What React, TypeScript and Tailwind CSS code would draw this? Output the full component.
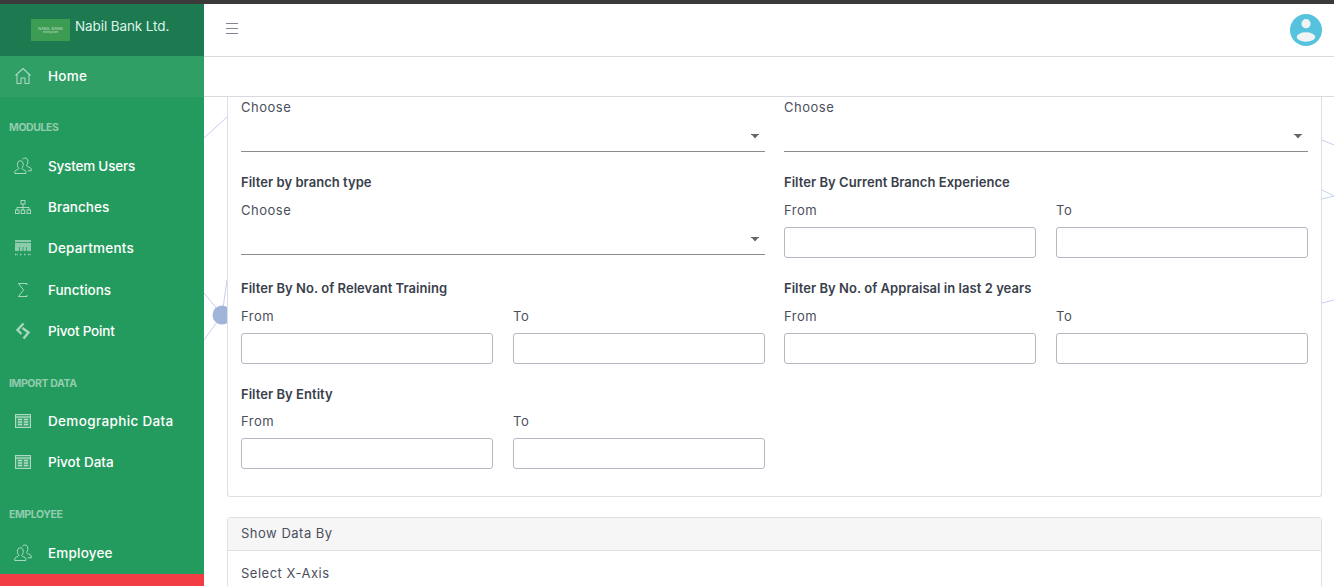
import React from "react";

function IconHome() {
  return (
    <svg width="18" height="18" viewBox="0 0 18 18" fill="none" stroke="currentColor" strokeWidth="1.1">
      <path d="M1.500 8.500 9 1.500l7.500 7M3 7.500v9h4v-5.500h4v5.500h4v-9" strokeLinejoin="round" />
    </svg>
  );
}
function IconUsers() {
  return (
    <svg width="18" height="18" viewBox="0 0 18 18" fill="none" stroke="currentColor" strokeWidth="1">
      <path d="M.8 16.500v-1.900c0-1.500 3.500-1.700 4.100-3.300-1-1-1.500-2.300-1.500-4 0-2.200 1.100-3.500 2.900-3.500s2.900 1.300 2.900 3.500c0 1.700-.5 3-1.500 4 .6 1.600 4.100 1.800 4.100 3.300v1.900z" />
      <path d="M8.300 2.400C8.800 1.500 9.800 1 11 1c1.800 0 2.900 1.300 2.900 3.500 0 1.700-.5 3-1.500 4 .6 1.600 4.800 1.800 4.800 3.300v2h-3.400" />
    </svg>
  );
}
function IconBranches() {
  return (
    <svg width="18" height="18" viewBox="0 0 18 18" fill="none" stroke="currentColor" strokeWidth="1">
      <rect x="7" y="2.500" width="4" height="3.500" />
      <path d="M9 6v3M3 12V9.500h12V12M9 9.500V12" />
      <rect x="1.500" y="12" width="3.500" height="3.500" />
      <rect x="7.200" y="12" width="3.500" height="3.500" />
      <rect x="13" y="12" width="3.500" height="3.500" />
    </svg>
  );
}
function IconDept() {
  return (
    <svg width="18" height="18" viewBox="0 0 18 18" fill="none" stroke="currentColor">
      <path d="M1 1h16v10H1z" fill="currentColor" stroke="none" opacity=".8" />
      <path d="M1 3.500h16" stroke="#249b5e" strokeWidth=".8" />
      <path d="M1 11.500h16" strokeWidth="1.400" opacity=".7" />
      <path d="M5.500 8v6M9 8v6M12.500 8v6" stroke="#249b5e" strokeWidth=".8" />
      <path d="M1 15.500h3M6 15.500h2M10 15.500h2M14 15.500h3" strokeWidth="1.500" strokeDasharray="1 .6" />
    </svg>
  );
}
function IconSigma() {
  return (
    <svg width="18" height="18" viewBox="0 0 18 18" fill="none" stroke="currentColor" strokeWidth="1">
      <path d="M13 4V2.500H4.500L9.500 9l-5 6.500H13V14" />
    </svg>
  );
}
function IconPivot() {
  return (
    <svg width="18" height="18" viewBox="0 0 18 18" fill="none" stroke="currentColor" strokeWidth="2.400">
      <path d="M9.500 1.500 3.500 8 7.500 12" />
      <path d="M8.500 6 14.500 10.500 9.500 16.500" />
    </svg>
  );
}
function IconTable() {
  return (
    <svg width="18" height="18" viewBox="0 0 18 18" fill="none" stroke="currentColor" strokeWidth="1">
      <rect x="1.500" y="2.500" width="15" height="13" fill="currentColor" fillOpacity=".25" />
      <path d="M1.500 5h15" strokeWidth="1.200" />
      <path d="M4 7.500h4M4 10h4M4 12.500h4M10 7.500h4M10 10h4M10 12.500h4" strokeWidth="1.300" />
    </svg>
  );
}

function NavItem({
  icon,
  label,
  active,
  track,
}: {
  icon: React.ReactNode;
  label: string;
  active?: boolean;
  track: string;
}) {
  return (
    <div className={`flex h-[41.25px] items-center pb-[2px] pl-[14px] ${active ? "bg-[#2f9f66]" : ""}`}>
      <span className="flex w-[34px] text-white/60">{icon}</span>
      <span className={`text-[13.5px] font-medium text-white ${track}`}>{label}</span>
    </div>
  );
}

function SectionLabel({ children }: { children: React.ReactNode }) {
  return (
    <div className="flex h-[49px] items-start pl-[9px] pt-[24px] text-[10.5px] leading-[14px] font-bold tracking-[-0.4px] text-white/50">
      {children}
    </div>
  );
}

function Caret() {
  return (
    <svg width="8" height="5" viewBox="0 0 8 5" className="text-[#666]">
      <path d="M0 0h8v1H7L4 4.500 1 1H0z" fill="currentColor" />
    </svg>
  );
}

function Label({ children }: { children: React.ReactNode }) {
  return <div className="h-[17px] text-[13px] leading-[17px] tracking-[0.5px] text-[#4b4f5c]">{children}</div>;
}

function Title({ children }: { children: React.ReactNode }) {
  return <div className="text-[13px] leading-[17px] font-semibold tracking-[0.04px] text-[#3a3f4b]">{children}</div>;
}

function SelectBox() {
  return (
    <div>
      <Label>Choose</Label>
      <div className="flex h-[36px] items-start justify-end border-b border-[#8c8c8c] pr-[6px] pt-[18px]">
        <Caret />
      </div>
    </div>
  );
}

function Input() {
  return <input className="block h-[31px] w-full rounded-[3px] border border-[#b7b7c2] bg-white" />;
}

function Range() {
  return (
    <div className="grid grid-cols-2 gap-x-[20px]">
      <div>
        <Label>From</Label>
        <div className="mt-[8px]"><Input /></div>
      </div>
      <div>
        <Label>To</Label>
        <div className="mt-[8px]"><Input /></div>
      </div>
    </div>
  );
}

export default function App() {
  return (
    <div
      className="flex h-[586px] w-[1334px] flex-col overflow-hidden bg-white"
      style={{ fontFamily: '"Inter", "Noto Sans", sans-serif' }}
    >
      <div className="h-[4px] shrink-0 bg-[#3a3a3a]" />
      <div className="flex min-h-0 flex-1">
        <aside className="flex w-[204px] shrink-0 flex-col bg-[#249b5e]">
          <div className="flex h-[52px] shrink-0 items-start bg-[#1d7a50] pl-[31px] pt-[15px]">
            <div className="flex h-[22px] w-[39px] flex-col items-center justify-center bg-[#3c9c52] font-normal text-white/70">
              <span className="text-[4px] leading-[5px] tracking-[0.1px] whitespace-nowrap">NABIL BANK</span>
              <span className="text-[2px] leading-[3px] whitespace-nowrap">Inspiring Growth</span>
            </div>
            <span className="-mt-[2px] ml-[5px] text-[13.5px] leading-[18px] font-normal tracking-[-0.1px] whitespace-nowrap text-[#dcf3ea]">
              Nabil Bank Ltd.
            </span>
          </div>
          <NavItem active icon={<IconHome />} label="Home" track="tracking-[0.3px]" />
          <SectionLabel>MODULES</SectionLabel>
          <NavItem icon={<IconUsers />} label="System Users" track="tracking-[-0.2px]" />
          <NavItem icon={<IconBranches />} label="Branches" track="tracking-[0.05px]" />
          <NavItem icon={<IconDept />} label="Departments" track="tracking-[0.2px]" />
          <NavItem icon={<IconSigma />} label="Functions" track="tracking-[0px]" />
          <NavItem icon={<IconPivot />} label="Pivot Point" track="tracking-[-0.2px]" />
          <SectionLabel>IMPORT DATA</SectionLabel>
          <NavItem icon={<IconTable />} label="Demographic Data" track="tracking-[0.35px]" />
          <NavItem icon={<IconTable />} label="Pivot Data" track="tracking-[0px]" />
          <SectionLabel>EMPLOYEE</SectionLabel>
          <NavItem icon={<IconUsers />} label="Employee" track="tracking-[0.2px]" />
          <div className="flex-1 bg-[#f23d45]" />
        </aside>

        <main className="flex min-w-0 flex-1 flex-col">
          <header className="flex h-[53px] shrink-0 items-center justify-between border-b border-[#d9d9e0] pl-[22px] pr-[12px]">
            <svg width="12" height="11" viewBox="0 0 12 11" className="-mt-[3px] text-[#80858f]">
              <path d="M0 .5h12M0 5.500h12M0 10.500h12" stroke="currentColor" strokeWidth="1" />
            </svg>
            <svg width="32" height="32" viewBox="0 0 32 32" className="-mt-[1px]">
              <circle cx="16" cy="16" r="16" fill="#55c3dd" />
              <circle cx="16" cy="9.700" r="4.600" fill="#f1f4f5" />
              <ellipse cx="16" cy="23" rx="9.300" ry="4.700" fill="#f1f4f5" />
            </svg>
          </header>
          <div className="h-[40px] shrink-0 border-b border-[#d9d9e0]" />

          <div className="relative min-h-0 flex-1 overflow-hidden pl-[23px] pr-[12px]">
            <svg className="absolute inset-0 h-full w-full" viewBox="0 0 1130 489" fill="none">
              <path d="M0 41 23 20M0 196 18 218M0 243 18 218M18 218 23 183" stroke="#c3cfe8" strokeWidth="1" />
              <circle cx="18" cy="218" r="9.500" fill="#a0b5d9" />
              <path d="M1118 43 1130 48M1118 93 1130 99 1118 102M1118 206 1130 203" stroke="#c3d2ef" strokeWidth="1" />
            </svg>

            <div className="relative">
              <section className="rounded-b-[3px] border-x border-b border-[#dedee4] bg-white px-[13px] pb-[27px] pt-[2px]">
                <div className="grid grid-cols-2 gap-x-[19px]">
                  <div><SelectBox /></div>
                  <div><SelectBox /></div>

                  <div className="mt-[22px]">
                    <Title>Filter by branch type</Title>
                    <div className="mt-[11px]"><SelectBox /></div>
                  </div>
                  <div className="mt-[22px]">
                    <Title>Filter By Current Branch Experience</Title>
                    <div className="mt-[11px]"><Range /></div>
                  </div>

                  <div className="mt-[22px]">
                    <Title>Filter By No. of Relevant Training</Title>
                    <div className="mt-[11px]"><Range /></div>
                  </div>
                  <div className="mt-[22px]">
                    <Title>Filter By No. of Appraisal in last 2 years</Title>
                    <div className="mt-[11px]"><Range /></div>
                  </div>

                  <div className="mt-[22px]">
                    <Title>Filter By Entity</Title>
                    <div className="mt-[10px]"><Range /></div>
                  </div>
                </div>
              </section>

              <section className="mt-[20px] rounded-t-[3px] border border-[#dedee4] bg-white">
                <div className="flex h-[33px] items-center border-b border-[#dedee4] bg-[#f6f6f6] px-[13px] text-[13px] tracking-[0.5px] text-[#4b4f5c]">
                  Show Data By
                </div>
                <div className="px-[13px] pt-[14px] pb-[20px]">
                  <Label>Select X-Axis</Label>
                </div>
              </section>
            </div>
          </div>
        </main>
      </div>
    </div>
  );
}
